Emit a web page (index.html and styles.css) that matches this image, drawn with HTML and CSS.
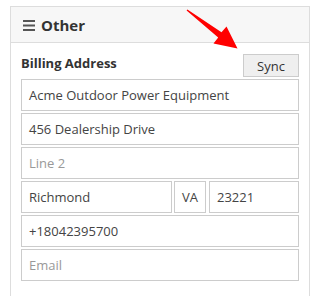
FILE: index.html
```html
<!DOCTYPE html>
<html>
<head>
<meta charset="utf-8">
<link rel="stylesheet" href="styles.css">
</head>
<body>
<div class="panel">
  <div class="panel-head">
    <svg class="bars" width="12" height="11" viewBox="0 0 12 11"><rect x="0" y="0" width="12" height="2" fill="#555"/><rect x="0" y="4.5" width="12" height="2" fill="#555"/><rect x="0" y="9" width="12" height="2" fill="#555"/></svg>
    <span class="title">Other</span>
  </div>
  <div class="panel-body">
    <div class="label-row">
      <span class="label">Billing Address</span>
      <button class="btn">Sync</button>
    </div>
    <div class="field">Acme Outdoor Power Equipment</div>
    <div class="field">456 Dealership Drive</div>
    <div class="field ph">Line 2</div>
    <div class="city-row">
      <div class="field">Richmond</div>
      <div class="field">VA</div>
      <div class="field">23221</div>
    </div>
    <div class="field">+18042395700</div>
    <div class="field ph">Email</div>
  </div>
</div>
<svg class="arrow" width="314" height="60" viewBox="0 0 314 60"><polygon points="186.6,10.5 187.4,9.5 221.5,32.2 226.5,26.5 237.5,48.5 213.5,43.5 218.2,37.6" fill="#ff0000"/></svg>
</body>
</html>
```
FILE: styles.css
```css
html, body { margin: 0; padding: 0; background: #fff; }
body { font-family: "Open Sans", "Liberation Sans", sans-serif; color: #444; position: relative; width: 314px; height: 296px; overflow: hidden; }
.panel { margin: 6px 0 0 10px; width: 300px; border: 1px solid #ddd; border-bottom: none; height: 290px; box-sizing: border-box; }
.panel-head { height: 35px; background: #f7f7f7; border-bottom: 1px solid #ddd; display: flex; align-items: center; padding-left: 12px; }
.bars { margin-right: 6px; margin-top: 1px; }
.title { font-weight: 700; font-size: 15px; color: #333; }
.panel-body { padding: 10px 10px 0 10px; }
.label-row { display: flex; justify-content: space-between; align-items: center; height: 24px; margin-bottom: 2px; }
.label { font-weight: 700; font-size: 13px; color: #333; margin-top: -4px; }
.btn { width: 56px; height: 23px; margin-top: 1px; border: 1px solid #ccc; background: #efefef; font-family: "Open Sans", "Liberation Sans", sans-serif; font-size: 13px; color: #333; padding: 0; border-radius: 0; }
.field { height: 32px; box-sizing: border-box; border: 1px solid #ccc; margin-bottom: 2px; font-size: 13px; line-height: 30px; padding-left: 7px; color: #444; white-space: nowrap; overflow: hidden; }
.ph { color: #999; }
.city-row { display: grid; grid-template-columns: 151px 32px 1fr; column-gap: 2px; }
.city-row .field:nth-child(3) { margin-left: 1px; }
.arrow { position: absolute; left: 0; top: 0; }
```
